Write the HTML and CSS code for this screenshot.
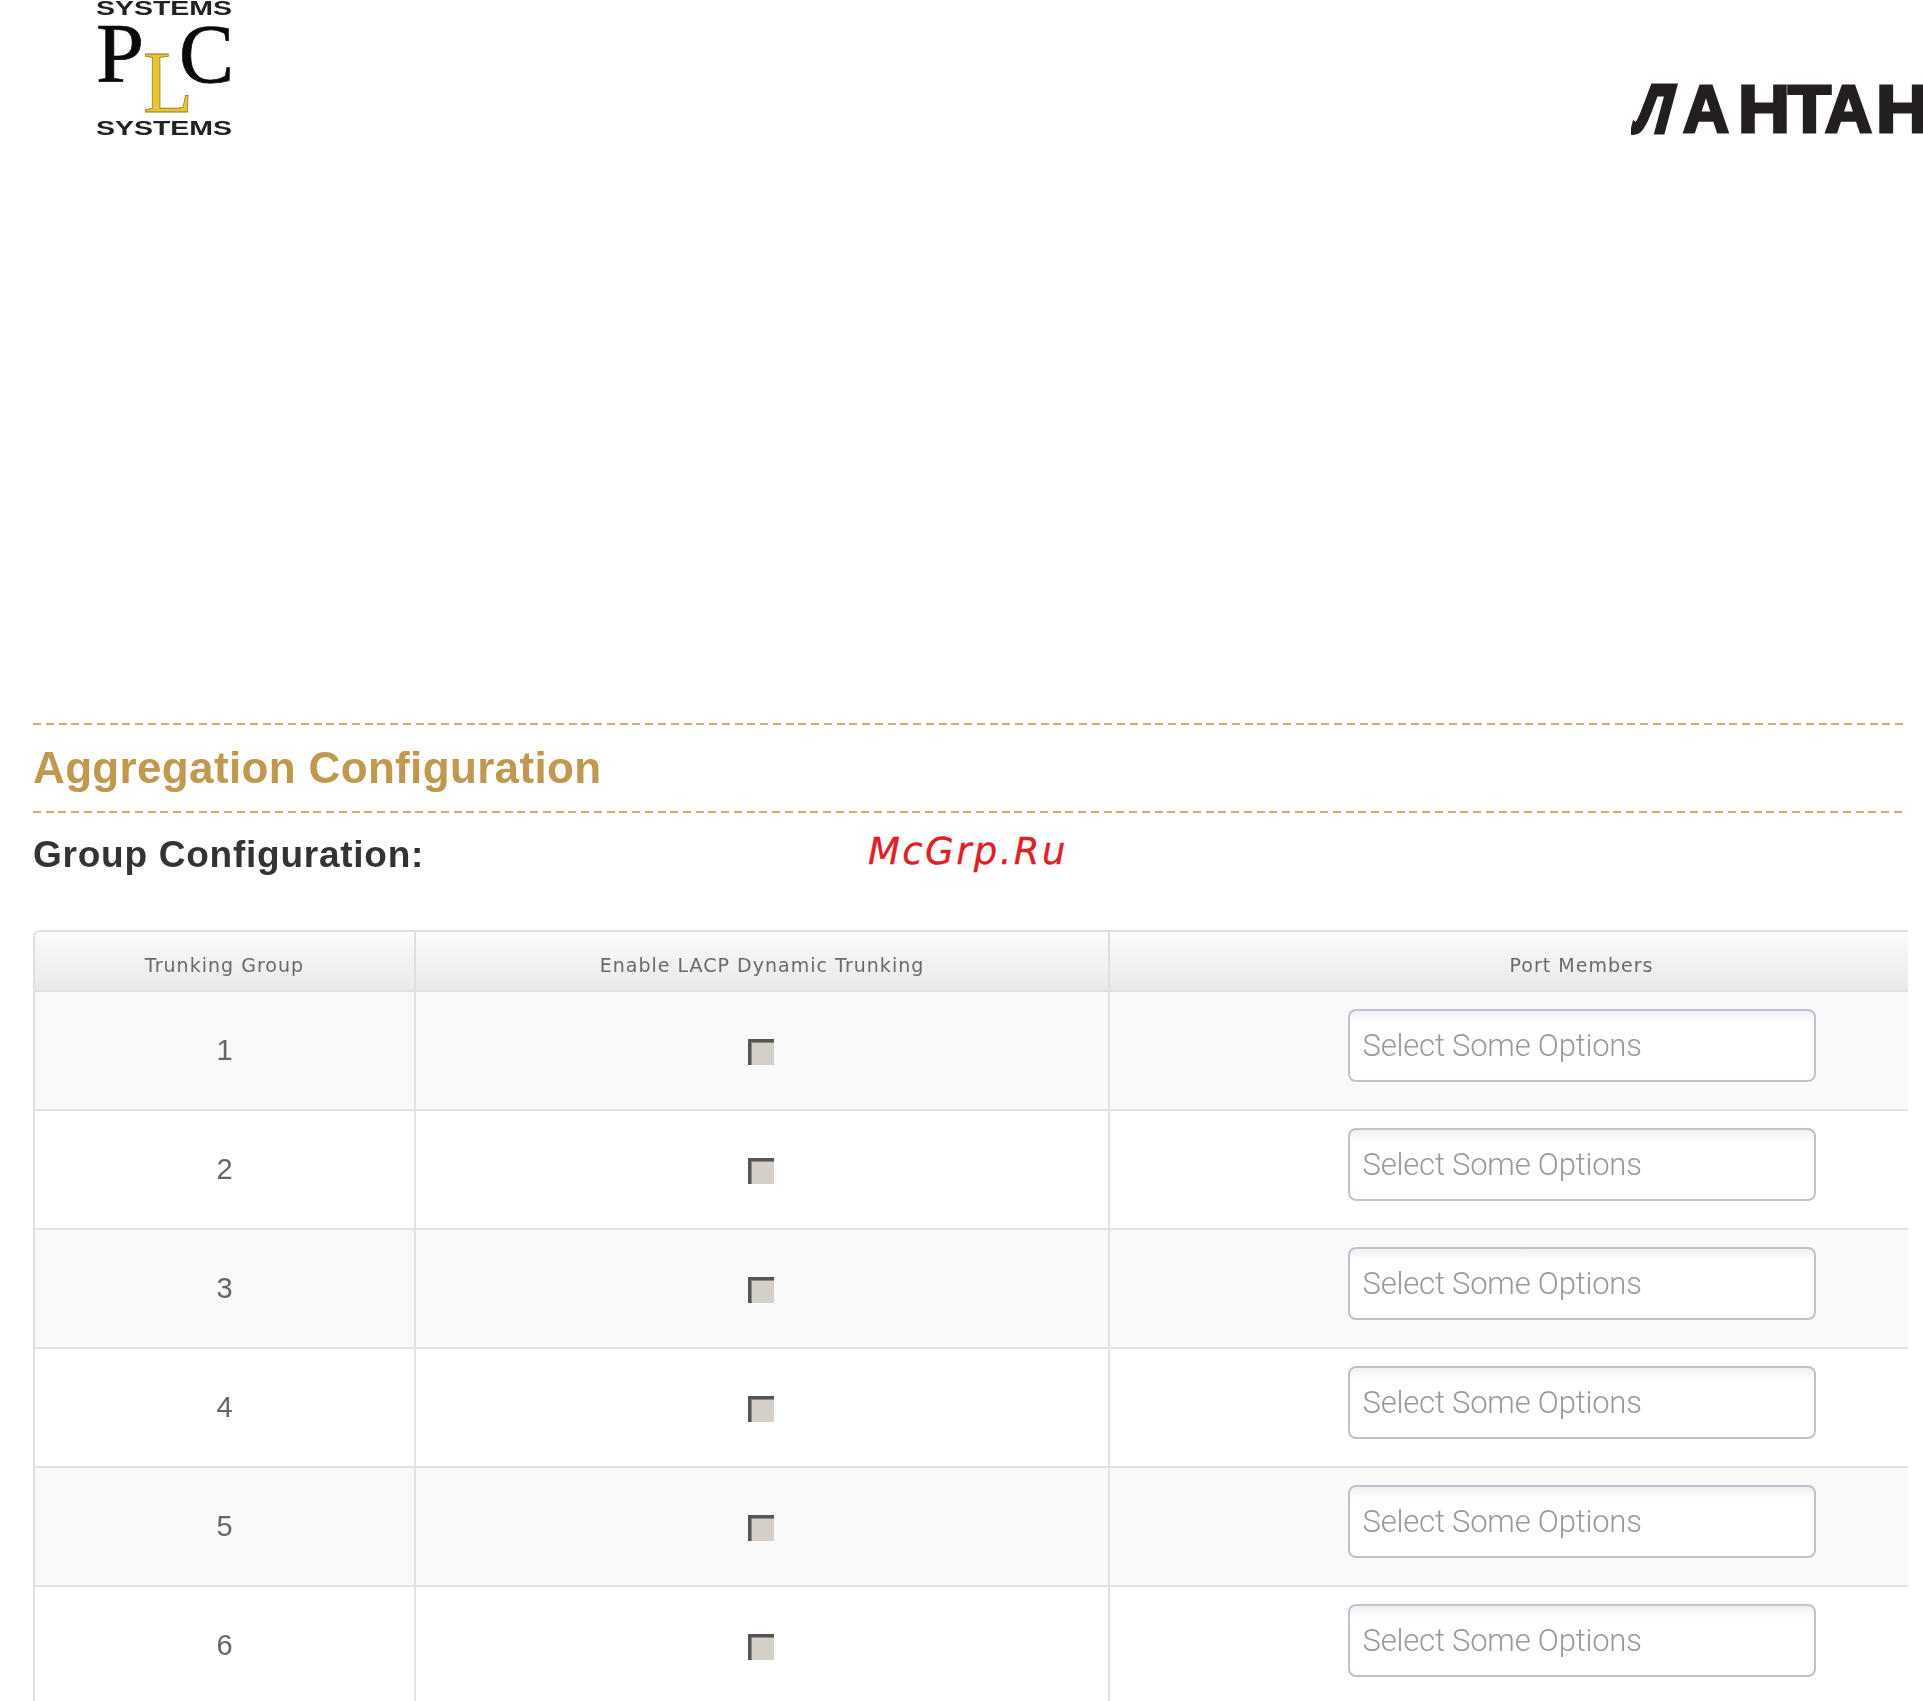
FILE: index.html
```html
<!DOCTYPE html>
<html lang="ru">
<head>
<meta charset="utf-8">
<title>Aggregation Configuration</title>
<link rel="stylesheet" href="styles.css">
</head>
<body>
<div class="page">
  <header class="masthead">
    <svg class="logo-plc" viewBox="0 0 136 136" width="136" height="136" aria-label="PLC Systems">
      <text class="plc-small" x="0" y="14.5" textLength="136" lengthAdjust="spacingAndGlyphs">SYSTEMS</text>
      <text class="plc-big" x="0" y="82" textLength="48" lengthAdjust="spacingAndGlyphs">P</text>
      <text class="plc-big" x="83" y="83" textLength="55" lengthAdjust="spacingAndGlyphs">C</text>
      <text class="plc-l" x="47" y="112" textLength="50" lengthAdjust="spacingAndGlyphs">L</text>
      <text class="plc-small" x="0" y="134.5" textLength="136" lengthAdjust="spacingAndGlyphs">SYSTEMS</text>
    </svg>
    <svg class="logo-lantan" viewBox="0 0 293 60" width="293" height="60" aria-label="ЛАНТАН">
      <text class="lantan-text lantan-slant" x="0" y="54" transform="translate(15 0) skewX(-15)" textLength="35" lengthAdjust="spacingAndGlyphs">Л</text>
      <text class="lantan-text" x="52" y="54" textLength="46" lengthAdjust="spacingAndGlyphs">А</text>
      <text class="lantan-text" x="107" y="54" textLength="52" lengthAdjust="spacingAndGlyphs">Н</text>
      <text class="lantan-text" x="157" y="54" textLength="43" lengthAdjust="spacingAndGlyphs">Т</text>
      <text class="lantan-text" x="194" y="54" textLength="47" lengthAdjust="spacingAndGlyphs">А</text>
      <text class="lantan-text" x="245" y="54" textLength="53" lengthAdjust="spacingAndGlyphs">Н</text>
    </svg>
  </header>

  <section class="content">
    <div class="rule rule-top"></div>
    <h1 class="title">Aggregation Configuration</h1>
    <div class="rule rule-bottom"></div>
    <h2 class="subtitle">Group Configuration:</h2>

    <div class="table-clip">
      <table class="groups">
        <thead>
          <tr>
            <th class="col-group">Trunking Group</th>
            <th class="col-lacp">Enable LACP Dynamic Trunking</th>
            <th class="col-ports">Port Members</th>
          </tr>
        </thead>
        <tbody>
          <tr><td class="num">1</td><td><span class="check"></span></td><td><div class="select">Select Some Options</div></td></tr>
          <tr><td class="num">2</td><td><span class="check"></span></td><td><div class="select">Select Some Options</div></td></tr>
          <tr><td class="num">3</td><td><span class="check"></span></td><td><div class="select">Select Some Options</div></td></tr>
          <tr><td class="num">4</td><td><span class="check"></span></td><td><div class="select">Select Some Options</div></td></tr>
          <tr><td class="num">5</td><td><span class="check"></span></td><td><div class="select">Select Some Options</div></td></tr>
          <tr><td class="num">6</td><td><span class="check"></span></td><td><div class="select">Select Some Options</div></td></tr>
        </tbody>
      </table>
    </div>
  </section>

  <div class="watermark">McGrp.Ru</div>
</div>
</body>
</html>
```

FILE: styles.css
```css
* { box-sizing: border-box; }
html, body { margin: 0; padding: 0; background: #fff; }
.page {
  position: relative;
  width: 1923px;
  height: 1701px;
  overflow: hidden;
  font-family: "Liberation Sans", Arial, sans-serif;
}
.masthead {
  height: 723px;
  padding-left: 96px;
  display: flex;
  justify-content: space-between;
  align-items: flex-start;
}
.logo-plc { display: block; overflow: hidden; filter: blur(0.6px); }
.plc-small { font: bold 21px "Liberation Sans", sans-serif; fill: #222; }
.plc-big { font: 85px "Liberation Serif", serif; fill: #0a0a0a; stroke: #0a0a0a; stroke-width: 0.7px; }
.plc-l { font: 89px "Liberation Serif", serif; fill: #e8c631; stroke: #8d7a2a; stroke-width: 0.8px; }
.logo-lantan { display: block; margin-top: 78px; margin-right: -1px; filter: blur(0.5px); }
.lantan-text { font: bold 67px "Liberation Sans", sans-serif; fill: #231f20; stroke: #231f20; stroke-width: 3px; }
.lantan-slant { stroke-width: 5px; }

.content { padding-left: 33px; filter: blur(0.45px); }
.rule { height: 2px; }
.rule-top {
  width: 1871px;
  background: repeating-linear-gradient(90deg, #d2ae72 0, #d2ae72 8px, transparent 8px, transparent 12.755px);
}
.rule-bottom {
  width: 1869px;
  background: repeating-linear-gradient(90deg, #d2ae72 0, #d2ae72 8px, transparent 8px, transparent 12.745px);
}
.title {
  margin: 0;
  height: 86px;
  padding-top: 17px;
  font-size: 44px;
  line-height: 52px;
  font-weight: bold;
  letter-spacing: 0.35px;
  color: #c0984f;
}
.subtitle {
  margin: 0;
  height: 117px;
  padding-top: 20px;
  font-size: 37px;
  line-height: 44px;
  font-weight: bold;
  color: #333;
  letter-spacing: 0.75px;
}
.table-clip { width: 1875px; overflow: hidden; }
.groups {
  width: 2022px;
  table-layout: fixed;
  border-collapse: separate;
  border-spacing: 0;
  border-top: 2px solid #dfdfdf;
  border-left: 2px solid #dfdfdf;
  border-top-left-radius: 7px;
}
.groups th {
  height: 60px;
  padding: 8px 0 0;
  font-family: "DejaVu Sans", sans-serif;
  font-weight: normal;
  font-size: 19px;
  letter-spacing: 1.02px;
  color: #6a6a6a;
  text-align: center;
  background: linear-gradient(#fbfbfb, #e9e9e9);
  border-bottom: 2px solid #dfdfdf;
  border-right: 2px solid #dfdfdf;
}
.groups th:first-child { border-top-left-radius: 6px; }
.col-group { width: 381px; }
.col-lacp { width: 694px; }
.groups td {
  height: 119px;
  padding: 0;
  text-align: center;
  vertical-align: middle;
  border-bottom: 2px solid #e2e2e2;
  border-right: 2px solid #e2e2e2;
}
.groups tbody tr:nth-child(odd) td { background: #f9f9f9; }
.num { font-size: 29px; color: #666; }
.check {
  display: inline-block;
  width: 26px;
  height: 26px;
  vertical-align: middle;
  margin: 3px 2px 0 0;
  background: #d4d0c8;
  border-top: 3px solid #555;
  border-left: 3px solid #555;
  box-shadow: inset 1px 1px 0 #8a8a86;
}
.select {
  width: 468px;
  height: 73px;
  margin: -10px auto 0;
  padding-left: 13px;
  text-align: left;
  font-family: Roboto, "Liberation Sans", sans-serif;
  font-weight: 300;
  font-size: 31px;
  line-height: 69px;
  letter-spacing: -0.2px;
  color: #999;
  background: linear-gradient(#f0f0f0, #fff 18%);
  border: 2px solid #bcc3d0;
  border-radius: 8px;
}
.watermark {
  position: absolute;
  left: 868px;
  top: 827px;
  font-family: "DejaVu Sans", sans-serif;
  font-style: italic;
  font-size: 37px;
  line-height: 50px;
  letter-spacing: 2.4px;
  color: #dc2126;
  -webkit-text-stroke: 0.3px #dc2126;
}
```
